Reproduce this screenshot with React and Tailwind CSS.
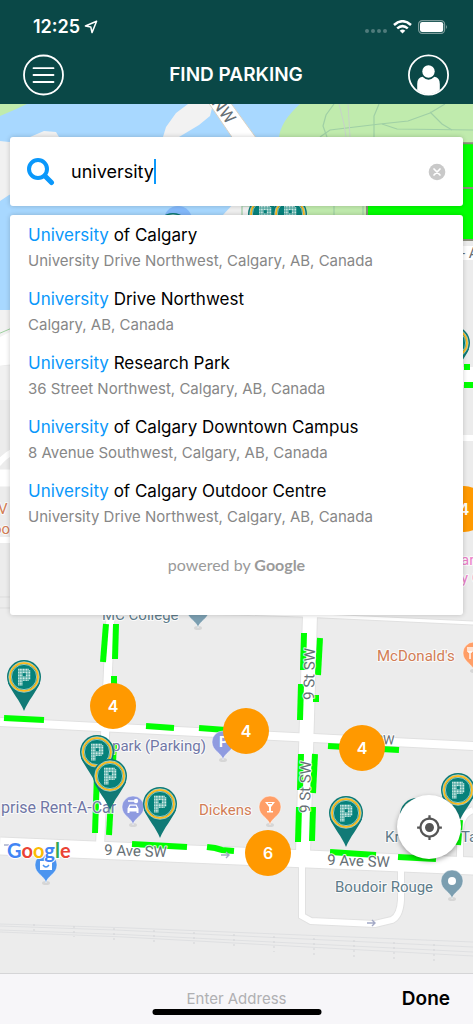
import React, { useState } from 'react';
import { MdMyLocation } from 'react-icons/md';

const RESULTS = [
  { id: 1, rest: 'of Calgary', address: 'University Drive Northwest, Calgary, AB, Canada' },
  { id: 2, rest: 'Drive Northwest', address: 'Calgary, AB, Canada' },
  { id: 3, rest: 'Research Park', address: '36 Street Northwest, Calgary, AB, Canada' },
  { id: 4, rest: 'of Calgary Downtown Campus', address: '8 Avenue Southwest, Calgary, AB, Canada' },
  { id: 5, rest: 'of Calgary Outdoor Centre', address: 'University Drive Northwest, Calgary, AB, Canada' },
];

// Map items are given as x, y on the map canvas
const CLUSTERS = [
  { x: 464, y: 405, count: 4 },
  { x: 113, y: 602, count: 4 },
  { x: 246, y: 627, count: 4 },
  { x: 362, y: 644, count: 4 },
  { x: 268, y: 749, count: 6 },
];

const PARKING_PINS = [
  [173, 126], [265, 110], [290, 110], [453, 239], [24, 573], [97, 648],
  [110, 672], [160, 700], [346, 709], [417, 711], [458, 686],
];

const FREE_SPOTS = [
  'M106 520 L103 558', 'M116 520 L115 555', 'M114 572 V590', 'M4 614 L44 616',
  'M146 622 L174 624', 'M199 624 L226 626', 'M304 529 L303 566', 'M320 534 L318 571',
  'M301 580 L300 616', 'M316 591 V598', 'M328 642 L399 646', 'M301 650 L300 686',
  'M315 650 L313 689', 'M299 703 L298 738', 'M313 703 L312 737', 'M330 748 L376 751',
  'M398 753 L436 755', 'M460 716 L458 741', 'M114 640 L109 731', 'M98 640 L95 729',
  'M132 740 L187 743', 'M207 743 L215 744 L222 746 L234 747', 'M464 263 H470', 'M464 281 H500',
];

// Bitmap of the dotted "P" inside every parking pin
const P_DOTS = [
  '1111111.',
  '11111111',
  '11111111',
  '111..111',
  '111..111',
  '11111111',
  '11111111',
  '1111111.',
  '111.....',
  '111.....',
  '111.....',
];

const ParkingPin = ({ x, y }) => (
  <g transform={`translate(${x} ${y})`}>
    <path d="M-16 6 C-12 15 -4 24 0 34 C4 24 12 15 16 6 Z" fill="#117a76" />
    <circle r="17" fill="#0c7a75" />
    <circle r="14" fill="#06827b" stroke="#fdbb1e" strokeWidth="2" />
    <circle r="15.3" fill="none" stroke="#e8f3ee" strokeWidth="0.6" />
    <circle r="12.6" fill="none" stroke="#e8f3ee" strokeWidth="0.6" />
    {P_DOTS.map((row, r) =>
      row.split('').map((dot, c) =>
        dot === '1' ? (
          <rect key={`${r}-${c}`} x={-5.9 + c * 1.55} y={-8.3 + r * 1.55} width="1.3" height="1.3" fill="#cfebe6" />
        ) : null
      )
    )}
  </g>
);

const PoiPin = ({ x, y, color, children }) => (
  <g transform={`translate(${x} ${y})`}>
    <ellipse cx="0" cy="18" rx="4" ry="2" fill="#d6d6d6" />
    <path d="M0 18 C-1 11 -11 9 -11 0 A11 11 0 0 1 11 0 C11 9 1 11 0 18 Z" fill={color} stroke="#fff" strokeOpacity="0.6" strokeWidth="0.8" />
    {children}
  </g>
);

const MapLabel = ({ x, y, color = '#5e7c8a', size = 15, rotate = 0, children }) => (
  <text
    transform={`translate(${x} ${y}) rotate(${rotate})`}
    fill={color}
    fontSize={size}
    stroke="#fff"
    strokeOpacity="0.8"
    strokeWidth="2"
    strokeLinejoin="round"
    paintOrder="stroke"
  >
    {children}
  </text>
);

const RailLine = ({ from, to }) => (
  <path d={`M0 ${from} L120 ${from + (to - from) * 0.2} L473 ${to} L1400 ${to + 45}`} />
);

const MapCanvas = () => (
  <svg className="absolute inset-0 h-full w-full" aria-label="Map" style={{ fontFamily: 'Roboto, sans-serif' }}>
    <rect width="100%" height="100%" fill="#ececec" />

    {/* River, islands and parks */}
    <path d="M0 0 H300 L240 112 L100 190 L9 206 L0 210 Z" fill="#a8d8ff" />
    <path d="M0 0 H27 L14 6 L0 12 Z" fill="#c0ebad" />
    <path d="M0 37 L9 38 L30 33 L44 27 L56 28 L62 38 L62 70 L9 91 L0 97 Z" fill="#f1f1f1" />
    <path d="M163 33 L166 23 L176 9 L188 0 H213 L210 12 L199 21 L179 33 V60 Z" fill="#f2f2f2" />
    <path d="M222 112 L235 98 H330 V130 H222 Z" fill="#f0f0f0" />
    <path d="M300 0 Q281 17 279 33 L300 98 L308 112 H1400 V0 Z" fill="#c0ebad" />
    <g fill="none" stroke="#9fcfa5" strokeWidth="1.2">
      <path d="M320 33 L330 26 L380 20 L408 17 L430 9 L445 0" />
      <path d="M334 0 L326 11 L323 22 L327 33" />
      <path d="M379 0 L374 12 V33" />
      <path d="M382 20 L397 25 L473 26" />
      <path d="M430 8 L442 20 L452 26" />
      <path d="M242 112 V102 H250" />
      <path d="M334 100 V112 M363 100 V112" />
    </g>
    <path d="M339 0 L344 20 L346 33 M348 0 L350 33" fill="none" stroke="#c6d2c9" />
    <path d="M208 -2 H230 L262 42 H238 Z" fill="#fff" stroke="#d8d2c6" />
    <path d="M367 100 V39 L1400 42 V136 H464 L367 132 Z" fill="#00ff00" stroke="#8b8b7b" strokeWidth="2" />
    <path d="M440 84 H1400" stroke="#8b8b7b" strokeWidth="2" />

    {/* Streets behind the result list */}
    <rect y="206" width="12" height="55" fill="#f2f2f2" />
    <path d="M-2 234 L12 227 V260 L-2 262 Z" fill="#fff" />
    <path d="M-2 230 L12 224" stroke="#9ed09f" />
    <rect y="262" width="12" height="34" fill="#f1f1f1" />
    <path d="M-2 360 Q4 352 14 347" fill="none" stroke="#fff" strokeWidth="6" />
    <path d="M0 374 H14" stroke="#fff" strokeWidth="17" />
    <path d="M0 436 H14" stroke="#fff" strokeWidth="6" />
    <path d="M0 493 H14 M0 504 H14" stroke="#ddd" />
    <path d="M460 149 H1400" stroke="#fff" strokeWidth="14" />
    <path d="M460 272 H1400" stroke="#fff" strokeWidth="18" />
    <path d="M460 334 H1400" stroke="#fff" strokeWidth="6" />

    {/* Street grid */}
    <g fill="none" stroke="#e1e1e1">
      <path d="M0 618 L473 642 L1400 686" strokeWidth="10" />
      <path d="M0 742 L473 762 L1400 801" strokeWidth="19" />
      <path d="M111 500 L100 742" strokeWidth="10" />
      <path d="M310 510 L303 750" strokeWidth="16" />
      <path d="M302 750 V812 L311 817 L375 820 L392 816 Q400 812 401 796 V760" strokeWidth="8" />
      <path d="M200 508 L300 511 L473 519 L1400 560" strokeWidth="5" />
      <path d="M473 706 Q460 710 460 730 V755" strokeWidth="8" />
    </g>
    <g fill="none" stroke="#fff">
      <path d="M0 618 L473 642 L1400 686" strokeWidth="8" />
      <path d="M0 742 L473 762 L1400 801" strokeWidth="17" />
      <path d="M111 500 L100 742" strokeWidth="8" />
      <path d="M310 510 L303 750" strokeWidth="14" />
      <path d="M302 750 V812 L311 817 L375 820 L392 816 Q400 812 401 796 V760" strokeWidth="6" />
      <path d="M200 508 L300 511 L473 519 L1400 560" strokeWidth="3" />
      <path d="M473 706 Q460 710 460 730 V755" strokeWidth="6" />
    </g>

    {/* Rail tracks */}
    <g fill="none" stroke="#dfe0e2">
      <RailLine from={820} to={838} />
      <RailLine from={822} to={843} />
      <RailLine from={826} to={848} />
      <RailLine from={828} to={852} />
      {Array.from({ length: 11 }, (_, i) => (
        <path
          key={i}
          d={`M${34 + i * 40} ${820 + i * 2} v${10 + i}`}
          stroke="#d3d4d7"
          strokeDasharray="2 3"
        />
      ))}
    </g>

    <g fill="none" stroke="#00ff00" strokeWidth="6">
      {FREE_SPOTS.map((d) => (
        <path key={d} d={d} />
      ))}
    </g>

    {/* One way arrows */}
    <g fill="none" stroke="#a3a9c6" strokeWidth="1.4">
      <path d="M221 751 H229 M226 748 L229 751 L226 754" />
      <path d="M367 819 H375 M372 816 L375 819 L372 822" />
      <path d="M4 741 H9" />
    </g>

    {/* Points of interest */}
    <PoiPin x={198} y={506} color="#7b9eb0" />
    <PoiPin x={223} y={638} color="#8f9be0">
      <text x="-4" y="5" fill="#fff" fontSize="14" fontWeight="700">P</text>
    </PoiPin>
    <PoiPin x={133} y={703} color="#8f9be0">
      <path d="M-5.500 6 V1.500 L-3.500 -2.500 H3.500 L5.500 1.500 V6 H3.500 V4.500 H-3.500 V6 Z" fill="#fff" />
      <path d="M-2.700 -1.200 H2.700 L3.700 1 H-3.700 Z" fill="#8f9be0" />
      <path d="M-5 -6 H1" stroke="#fff" strokeWidth="1.5" />
      <circle cx="3" cy="-6" r="2.2" fill="#fff" />
    </PoiPin>
    <PoiPin x={270} y={703} color="#ff9e67">
      <path d="M-5 -5 H5 L1 0 V4 H3 V5.5 H-3 V4 H-1 V0 Z" fill="#fff" />
      <path d="M-2 -3.5 H2" stroke="#ff9e67" />
    </PoiPin>
    <PoiPin x={474} y={549} color="#ff9e67">
      <path d="M-6 -6 V-1 M-4 -6 V6 M-2 -6 V-1 M-6 -1 H-2 M3 -6 V6" stroke="#fff" strokeWidth="1.4" fill="none" />
    </PoiPin>
    <PoiPin x={452} y={777} color="#7b9eb0">
      <circle r="4" fill="#fff" />
    </PoiPin>
    <PoiPin x={46} y={761} color="#4b94ef">
      <rect x="-6" y="-4" width="12" height="9" fill="#fff" />
      <path d="M-3 0 Q0 4 3 0" fill="none" stroke="#4b94ef" strokeWidth="1.4" />
    </PoiPin>

    <MapLabel x={211} y={-1} size={17} rotate={54} color="#666f75">NW</MapLabel>
    <MapLabel x={102} y={516}>MC College</MapLabel>
    <MapLabel x={377} y={557} color="#d27d55">McDonald&apos;s</MapLabel>
    <MapLabel x={314} y={596} rotate={-89} color="#666f75">9 St SW</MapLabel>
    <MapLabel x={310} y={709} rotate={-89} color="#666f75">9 St SW</MapLabel>
    <MapLabel x={375} y={640} size={13} rotate={2} color="#666f75">SW</MapLabel>
    <MapLabel x={112} y={647} color="#7077a6">park (Parking)</MapLabel>
    <MapLabel x={1} y={709} size={16} color="#7077a6">prise Rent-A-Car</MapLabel>
    <MapLabel x={199} y={711} color="#d27d55">Dickens</MapLabel>
    <MapLabel x={104} y={751} rotate={2} color="#666f75">9 Ave SW</MapLabel>
    <MapLabel x={327} y={761} rotate={2} color="#666f75">9 Ave SW</MapLabel>
    <MapLabel x={335} y={788}>Boudoir Rouge</MapLabel>
    <MapLabel x={385} y={738}>Kr</MapLabel>
    <MapLabel x={461} y={738}>Ta</MapLabel>
    <MapLabel x={-2} y={410} color="#d27d55">V</MapLabel>
    <MapLabel x={-7} y={430} color="#d27d55">oo</MapLabel>
    <MapLabel x={461} y={461} color="#ea7fc8">ar</MapLabel>
    <MapLabel x={461} y={479} color="#ea7fc8">y C</MapLabel>
    <MapLabel x={461} y={154} color="#666f75">- A</MapLabel>

    <circle cx="178" cy="116" r="14" fill="#84b9fb" />
    {PARKING_PINS.map(([x, y]) => (
      <ParkingPin key={`${x}-${y}`} x={x} y={y} />
    ))}

    <text
      x="7"
      y="754"
      fontSize="20"
      stroke="#fff"
      strokeWidth="2"
      paintOrder="stroke"
      style={{ fontFamily: 'Lato, sans-serif', fontWeight: 700 }}
    >
      <tspan fill="#4285f4">G</tspan>
      <tspan fill="#ea4335">o</tspan>
      <tspan fill="#fbbc05">o</tspan>
      <tspan fill="#4285f4">g</tspan>
      <tspan fill="#34a853">l</tspan>
      <tspan fill="#ea4335">e</tspan>
    </text>
  </svg>
);

const StatusBar = () => (
  <div className="flex h-[54px] items-center justify-between pr-[25px] pl-[33px]">
    <div className="flex items-center gap-1">
      <span className="text-[18px] leading-6 font-semibold">12:25</span>
      <svg width="14" height="14" viewBox="0 0 14 14" fill="none" stroke="currentColor" strokeWidth="1.5" strokeLinejoin="round">
        <path d="M12.6 1.2 L1.4 6 L6.8 7 L8 12.6 Z" />
      </svg>
    </div>
    <div className="flex items-center gap-[6px]">
      <svg width="22" height="14" viewBox="0 0 22 14" fill="#507b7b">
        <circle cx="2" cy="11" r="2" />
        <circle cx="8" cy="11" r="2" />
        <circle cx="14" cy="11" r="2" />
        <circle cx="20" cy="11" r="2" />
      </svg>
      <svg width="19" height="14" viewBox="0 0 19 14" fill="none" stroke="currentColor" strokeWidth="2.5">
        <path d="M1 5 Q9.5 -2.6 18 5" />
        <path d="M4.2 8.4 Q9.5 3.8 14.8 8.4" />
        <path d="M9.5 13.6 L6.7 10.8 Q9.5 8.4 12.3 10.8 Z" fill="currentColor" stroke="none" />
      </svg>
      <svg width="30" height="14" viewBox="0 0 30 14">
        <rect x="0.6" y="0.6" width="26" height="12.8" rx="3.6" fill="none" stroke="#7c9c9b" strokeWidth="1.2" />
        <rect x="2" y="2" width="23.2" height="10" rx="2.2" fill="#fff" />
        <path d="M28 5 Q30 7 28 9 Z" fill="#7c9c9b" />
      </svg>
    </div>
  </div>
);

const Header = () => (
  <header className="h-[104px] bg-[#0a4847] text-white">
    <StatusBar />
    <div className="flex items-center justify-between pr-6 pl-[23px]">
      <button type="button" aria-label="Menu" className="h-[42px] w-[41px]">
        <svg width="41" height="42" viewBox="0 0 41 42" fill="none" stroke="currentColor" strokeWidth="1.8" strokeLinecap="round">
          <circle cx="20.5" cy="21" r="19.5" />
          <path d="M10.5 14.2 H30.5 M10.5 21 H30.5 M10.5 28 H30.5" />
        </svg>
      </button>
      <h1 className="text-[19px] leading-6 font-semibold">FIND PARKING</h1>
      <button type="button" aria-label="Profile" className="h-[42px] w-[41px]">
        <svg width="41" height="42" viewBox="0 0 41 42">
          <circle cx="20.5" cy="21" r="19.6" fill="none" stroke="#fff" strokeWidth="1.8" />
          <circle cx="20.5" cy="17.5" r="6.2" fill="#fff" />
          <path d="M9.2 36 V30 Q9.2 23.5 14.5 22.8 Q20.5 28.6 26.5 22.8 Q31.8 23.5 31.8 30 V36 Q27 40.4 20.5 40.4 Q14 40.4 9.2 36 Z" fill="#fff" />
        </svg>
      </button>
    </div>
  </header>
);

const SearchBox = ({ query, onChange }) => (
  <div className="flex h-[69px] items-center rounded-[3px] bg-white px-[17px] shadow-[0_0_5px_rgba(0,0,0,0.2)]">
    <svg className="shrink-0" width="28" height="28" viewBox="0 0 28 28" fill="none" stroke="#0a98fb">
      <circle cx="11" cy="11" r="9" strokeWidth="4" />
      <path d="M18 18 L24.5 24.5" strokeWidth="5" strokeLinecap="round" />
    </svg>
    <label htmlFor="search" className="sr-only">Search address</label>
    <input
      id="search"
      type="text"
      value={query}
      onChange={(e) => onChange(e.target.value)}
      className="ml-4 field-sizing-content bg-transparent text-[18px] leading-6 text-black caret-[#0a98fb] outline-none"
    />
    <span className="h-[25px] w-[2px] bg-[#0a98fb]" />
    <button type="button" aria-label="Clear" className="ml-auto" onClick={() => onChange('')}>
      <svg width="18" height="18" viewBox="0 0 18 18">
        <circle cx="9" cy="9" r="8.3" fill="#c9c9c9" />
        <path d="M6 6 L12 12 M12 6 L6 12" stroke="#fff" strokeWidth="1.7" strokeLinecap="round" />
      </svg>
    </button>
  </div>
);

const ResultList = () => (
  <div className="mt-[9px] rounded-[3px] bg-white pt-[7px] pb-[38px] shadow-[0_0_5px_rgba(0,0,0,0.2)]">
    <ul className="flex flex-col gap-3">
      {RESULTS.map((result) => (
        <li key={result.id}>
          <button type="button" className="block w-full px-[18px] text-left">
            <span className="block text-[17px] leading-[26px] text-black">
              <span className="text-[#0a98fb]">University</span> {result.rest}
            </span>
            <span className="block text-[15px] leading-[26px] text-[#878787]">{result.address}</span>
          </button>
        </li>
      ))}
    </ul>
    <p className="mt-[23px] text-center font-['Lato',sans-serif] text-[16px] leading-6 text-[#9a9a9a]">
      powered by <span className="font-bold">Google</span>
    </p>
  </div>
);

const App = () => {
  const [query, setQuery] = useState('university');

  return (
    <div className="flex min-h-screen flex-col font-['Inter',sans-serif]">
      <Header />

      <main className="relative flex-1 overflow-hidden">
        <MapCanvas />
        {CLUSTERS.map(({ x, y, count }) => (
          <button
            key={`${x}-${y}`}
            type="button"
            className="absolute h-[46px] w-[46px] -translate-x-1/2 -translate-y-1/2 rounded-full bg-[#ff9900] text-base font-semibold text-white"
            style={{ left: x, top: y }}
          >
            {count}
          </button>
        ))}
        <section className="relative mx-[10px] mt-[33px]">
          <SearchBox query={query} onChange={setQuery} />
          <ResultList />
        </section>
        <button
          type="button"
          aria-label="My location"
          className="absolute right-3 bottom-[114px] flex h-16 w-16 items-center justify-center rounded-full bg-white shadow-[0_2px_5px_rgba(0,0,0,0.35)]"
        >
          <MdMyLocation size={27} color="#555555" />
        </button>
      </main>

      <footer className="relative grid h-[51px] grid-cols-[1fr_auto_1fr] items-center border-t border-[#d5d5d7] bg-[#f7f6f9] px-[23px]">
        <span className="col-start-2 text-[15px] leading-6 text-[#b0b0b3]">Enter Address</span>
        <button type="button" className="justify-self-end text-[19px] leading-6 font-semibold text-black">Done</button>
        <span className="absolute bottom-[9px] left-1/2 h-[6px] w-[169px] -translate-x-1/2 rounded-full bg-black" />
      </footer>
    </div>
  );
};

export default App;
